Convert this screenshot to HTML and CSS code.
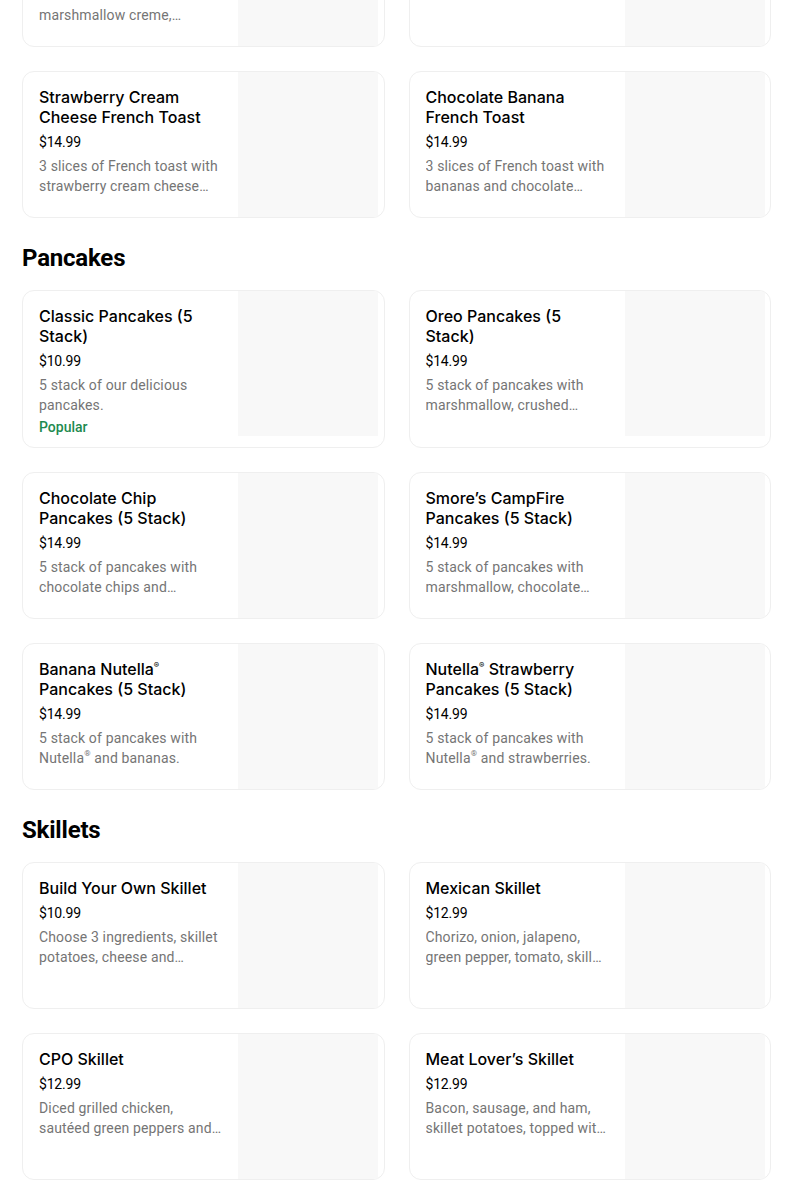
FILE: index.html
```html
<!DOCTYPE html>
<html lang="en">
<head>
<meta charset="utf-8">
<title>Menu</title>
<link rel="stylesheet" href="styles.css">
</head>
<body>
<main class="menu">
  <section class="section">
    <h2 class="section-title">French Toast</h2>
    <div class="grid">
      <div class="card">
        <div class="info">
          <div class="name">S’mores CampFire French Toast</div>
          <div class="price">$14.99</div>
          <div class="desc">3 slices of French toast with marshmallow creme, chocolate chips and graham crackers.</div>
        </div>
        <div class="thumb"></div>
      </div>
      <div class="card">
        <div class="info">
          <div class="name">Nutella<span class="reg">®</span> French Toast</div>
          <div class="price">$14.99</div>
          <div class="desc">3 slices of French toast with Nutella<span class="reg">®</span> and fresh strawberries.</div>
        </div>
        <div class="thumb"></div>
      </div>
      <div class="card">
        <div class="info">
          <div class="name">Strawberry Cream Cheese French Toast</div>
          <div class="price">$14.99</div>
          <div class="desc">3 slices of French toast with strawberry cream cheese filling, topped with strawberries.</div>
        </div>
        <div class="thumb"></div>
      </div>
      <div class="card">
        <div class="info">
          <div class="name">Chocolate Banana French Toast</div>
          <div class="price">$14.99</div>
          <div class="desc">3 slices of French toast with bananas and chocolate chips, topped with powdered sugar.</div>
        </div>
        <div class="thumb"></div>
      </div>
    </div>
  </section>

  <section class="section">
    <h2 class="section-title">Pancakes</h2>
    <div class="grid">
      <div class="card">
        <div class="info">
          <div class="name">Classic Pancakes (5 Stack)</div>
          <div class="price">$10.99</div>
          <div class="desc">5 stack of our delicious pancakes.</div>
          <div class="tag">Popular</div>
        </div>
        <div class="thumb"></div>
      </div>
      <div class="card">
        <div class="info">
          <div class="name">Oreo Pancakes (5 Stack)</div>
          <div class="price">$14.99</div>
          <div class="desc">5 stack of pancakes with marshmallow, crushed strawberries and chocolate drizzle.</div>
        </div>
        <div class="thumb"></div>
      </div>
      <div class="card">
        <div class="info">
          <div class="name">Chocolate Chip Pancakes (5 Stack)</div>
          <div class="price">$14.99</div>
          <div class="desc">5 stack of pancakes with chocolate chips and powdered sugar.</div>
        </div>
        <div class="thumb"></div>
      </div>
      <div class="card">
        <div class="info">
          <div class="name">Smore’s CampFire Pancakes (5 Stack)</div>
          <div class="price">$14.99</div>
          <div class="desc">5 stack of pancakes with marshmallow, chocolate drizzle and graham crackers.</div>
        </div>
        <div class="thumb"></div>
      </div>
      <div class="card">
        <div class="info">
          <div class="name">Banana Nutella<span class="reg">®</span> Pancakes (5 Stack)</div>
          <div class="price">$14.99</div>
          <div class="desc">5 stack of pancakes with Nutella<span class="reg">®</span> and bananas.</div>
        </div>
        <div class="thumb"></div>
      </div>
      <div class="card">
        <div class="info">
          <div class="name">Nutella<span class="reg">®</span> Strawberry Pancakes (5 Stack)</div>
          <div class="price">$14.99</div>
          <div class="desc">5 stack of pancakes with Nutella<span class="reg">®</span> and strawberries.</div>
        </div>
        <div class="thumb"></div>
      </div>
    </div>
  </section>

  <section class="section">
    <h2 class="section-title">Skillets</h2>
    <div class="grid">
      <div class="card">
        <div class="info">
          <div class="name">Build Your Own Skillet</div>
          <div class="price">$10.99</div>
          <div class="desc">Choose 3 ingredients, skillet potatoes, cheese and buttermilk pancakes.</div>
        </div>
        <div class="thumb"></div>
      </div>
      <div class="card">
        <div class="info">
          <div class="name">Mexican Skillet</div>
          <div class="price">$12.99</div>
          <div class="desc">Chorizo, onion, jalapeno, green pepper, tomato, skillet potatoes, cheese and two eggs.</div>
        </div>
        <div class="thumb"></div>
      </div>
      <div class="card">
        <div class="info">
          <div class="name">CPO Skillet</div>
          <div class="price">$12.99</div>
          <div class="desc">Diced grilled chicken, sautéed green peppers and onions, skillet potatoes and two eggs.</div>
        </div>
        <div class="thumb"></div>
      </div>
      <div class="card">
        <div class="info">
          <div class="name">Meat Lover’s Skillet</div>
          <div class="price">$12.99</div>
          <div class="desc">Bacon, sausage, and ham, skillet potatoes, topped with cheese and two eggs.</div>
        </div>
        <div class="thumb"></div>
      </div>
    </div>
  </section>
</main>
</body>
</html>
```

FILE: styles.css
```css
* {
  box-sizing: border-box;
}

html, body {
  margin: 0;
  padding: 0;
  background: #ffffff;
}

body {
  font-family: Roboto, "Liberation Sans", Arial, sans-serif;
  color: #000000;
  overflow: hidden;
}

.menu {
  width: 771px;
  padding: 0 0 0 22px;
  margin-top: -172px;
}

.section-title {
  margin: 0;
  padding: 24px 0 16px;
  font-size: 24px;
  line-height: 32px;
  font-weight: 700;
  letter-spacing: -0.2px;
  color: #000000;
}

.grid {
  display: grid;
  grid-template-columns: 1fr 1fr;
  column-gap: 24px;
  row-gap: 24px;
}

.card {
  display: flex;
  align-items: flex-start;
  border: 1px solid #efefef;
  border-radius: 12px;
  overflow: hidden;
  background: #ffffff;
}

.info {
  flex: 0 0 215px;
  width: 215px;
  padding: 15px 16px 10px 16px;
}

.name {
  font-family: Inter, Roboto, "Liberation Sans", sans-serif;
  font-size: 16px;
  line-height: 20px;
  font-weight: 500;
  color: #000000;
  padding-right: 8px;
}

.price {
  margin-top: 5px;
  font-size: 14px;
  line-height: 20px;
  letter-spacing: -0.2px;
  color: #000000;
}

.desc {
  margin-top: 4px;
  font-size: 14px;
  line-height: 20px;
  letter-spacing: 0.15px;
  color: #757575;
  display: -webkit-box;
  -webkit-box-orient: vertical;
  -webkit-line-clamp: 2;
  overflow: hidden;
}

.tag {
  margin-top: 2px;
  font-size: 14px;
  line-height: 20px;
  font-weight: 500;
  color: #1e8a4f;
}

.reg {
  font-size: 8px;
  line-height: 12px;
  vertical-align: top;
}

.thumb {
  flex: 0 0 140px;
  width: 140px;
  height: 145px;
  margin-right: 5px;
  background: #f8f8f8;
}
```
